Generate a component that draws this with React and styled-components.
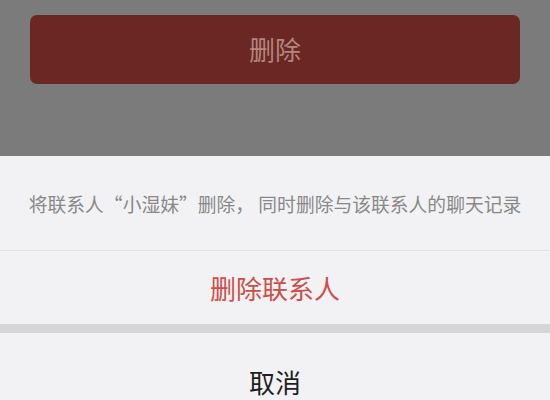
import React from 'react';
import styled, { createGlobalStyle } from 'styled-components';

const GlobalStyle = createGlobalStyle`
  html, body {
    margin: 0;
    padding: 0;
    height: 400px;
    overflow: hidden;
    background: #f2f2f4;
  }
  body {
    font-family: "Noto Sans CJK SC", "Noto Sans", sans-serif;
  }
`;

const Screen = styled.div`
  width: 550px;
  height: 400px;
  display: flex;
  flex-direction: column;
  overflow: hidden;
`;

const Backdrop = styled.div`
  height: 156px;
  flex-shrink: 0;
  background: #7b7b7b;
  padding: 15px 30px 0 30px;
  box-sizing: border-box;
`;

const DimButton = styled.button`
  display: flex;
  align-items: center;
  justify-content: center;
  width: 100%;
  height: 69px;
  border: none;
  border-radius: 7px;
  background: #6b2723;
  color: #b3867f;
  font-family: inherit;
  font-size: 26px;
  padding: 0 0 2px 0;
`;

const Sheet = styled.div`
  display: flex;
  flex-direction: column;
  background: #f2f2f4;
`;

const Message = styled.div`
  height: 94px;
  display: flex;
  align-items: center;
  justify-content: center;
  color: #888888;
  font-size: 18.8px;
  border-bottom: 1px solid #e3e3e5;
  white-space: nowrap;
`;

const Action = styled.div`
  height: ${p => p.$h}px;
  display: flex;
  align-items: center;
  justify-content: center;
  font-size: 26px;
  color: ${p => (p.$danger ? '#cb4f4a' : '#1f1f1f')};
`;

const Gap = styled.div`
  height: 9px;
  background: #d5d5d6;
`;

export default function App() {
  return (
    <Screen>
      <GlobalStyle />
      <Backdrop>
        <DimButton>删除</DimButton>
      </Backdrop>
      <Sheet>
        <Message>将联系人“小湿妹”删除， 同时删除与该联系人的聊天记录</Message>
        <Action $h={73} $danger>删除联系人</Action>
        <Gap />
        <Action $h={96}>取消</Action>
      </Sheet>
    </Screen>
  );
}
